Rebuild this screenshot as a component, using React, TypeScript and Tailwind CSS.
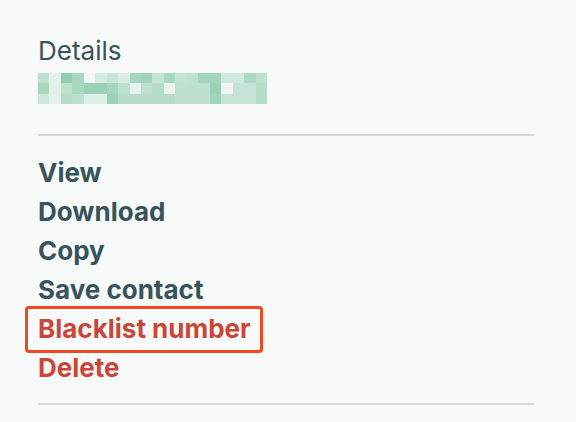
const rows: string[][] = [
  ["#bde0cf","#e3f1ea","#8dcfae","#a8d8c0","#f3f8f6","#d5ebe0","#c8e5d7","#dbeee5","#a5d6be","#9fd4ba","#c5e4d5","#a9d8c0","#c2e3d3","#bfe0cf","#a3d5bc","#a3d5bc","#d0e9dd","#d0e9dd","#acd9c3","#bde0cf"],
  ["#a8d8c0","#e3f1ea","#bde0cf","#a8d8c0","#99d2b5","#99d2b5","#a5d6be","#bde0cf","#e8f3ee","#bfe0cf","#b5dcc9","#e9f4ef","#bde0cf","#bde0cf","#bde0cf","#99d2b5","#eef6f2","#c5e4d5","#c5e4d5","#b5dcc9"],
  ["#cfe7db","#e3f1ea","#b5dcc9","#bde0cf","#ddefe6","#ddefe6","#99d2b5","#b5dcc9","#b5dcc9","#b5dcc9","#b5dcc9","#b5dcc9","#bfe0cf","#bfe0cf","#bfe0cf","#9fd4ba","#c5e4d5","#c5e4d5","#c5e4d5","#b5dcc9"],
];

export default function App() {
  return (
    <div className="w-[576px] h-[422px] bg-[#f8faf9] overflow-hidden" style={{ fontFamily: "Inter, 'Noto Sans', sans-serif" }}>
      <div className="pl-[38px] w-[534px] pt-[35px]">
        <div className="text-[26px] leading-[32px] text-[#37535b]">Details</div>
        <div className="mt-[6px] w-[229px] h-[31px] grid grid-cols-[repeat(20,1fr)] grid-rows-3">
          {rows.flat().map((c, i) => (
            <div key={i} style={{ backgroundColor: c }} />
          ))}
        </div>
        <div className="mt-[30px] h-[2px] bg-[#d7d9d8]" />
        <div className="mt-[17px] flex flex-col text-[26px] font-bold leading-[39px]">
          <div className="text-[#37535b]">View</div>
          <div className="text-[#37535b]">Download</div>
          <div className="text-[#37535b]">Copy</div>
          <div className="text-[#37535b]">Save contact</div>
          <div className="relative text-[#c9463b]">
            Blacklist number
            <span className="absolute left-[-13px] w-[238px] top-[-3px] h-[47px] border-[3px] border-[#f0481f] rounded-[4px]" />
          </div>
          <div className="text-[#c9463b]">Delete</div>
        </div>
        <div className="mt-[16px] h-[2px] bg-[#d7d9d8]" />
      </div>
    </div>
  );
}
